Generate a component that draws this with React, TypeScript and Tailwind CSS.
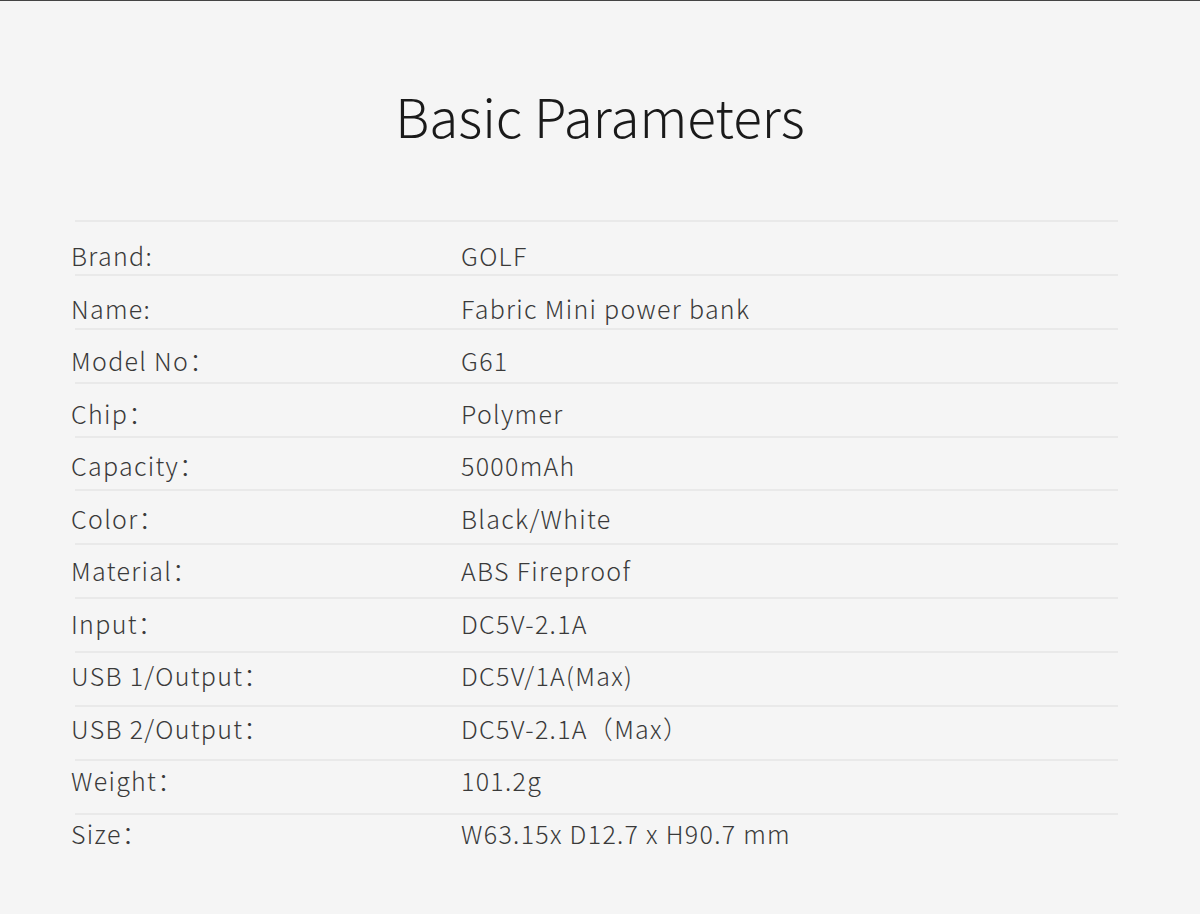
const specs: [string, string][] = [
  ["Brand:", "GOLF"],
  ["Name:", "Fabric Mini power bank"],
  ["Model No：", "G61"],
  ["Chip：", "Polymer"],
  ["Capacity：", "5000mAh"],
  ["Color：", "Black/White"],
  ["Material：", "ABS Fireproof"],
  ["Input：", "DC5V-2.1A"],
  ["USB 1/Output：", "DC5V/1A(Max)"],
  ["USB 2/Output：", "DC5V-2.1A（Max）"],
  ["Weight：", "101.2g"],
  ["Size：", "W63.15x D12.7 x H90.7 mm"],
];

export default function App() {
  return (
    <div
      className="min-h-[914px] bg-[#f5f5f5] border-t border-[#444444] font-light"
      style={{ fontFamily: '"Noto Sans CJK SC", "Noto Sans", sans-serif' }}
    >
      <h1 className="pt-[74px] text-center text-[53px] leading-[80px] text-[#1a1a1a] font-light">
        Basic Parameters
      </h1>

      <div className="relative mt-[65px] ml-[75px] w-[1043px]">
        {/* separator lines */}
        {specs.map(([label]) => (
          <div key={label} className="h-[53.9px] border-t-2 border-[#e9e9e9]" />
        ))}

        {/* text rows sit on their own rhythm over the lines */}
        <div className="absolute inset-x-0 top-0 pt-[9px] -ml-[4px] text-[25px] leading-[52.5px] tracking-[1.3px] text-[#3a3a3a]">
          {specs.map(([label, value]) => (
            <div key={label} className="flex">
              <div className="w-[390px]">{label}</div>
              <div>{value}</div>
            </div>
          ))}
        </div>
      </div>
    </div>
  );
}
